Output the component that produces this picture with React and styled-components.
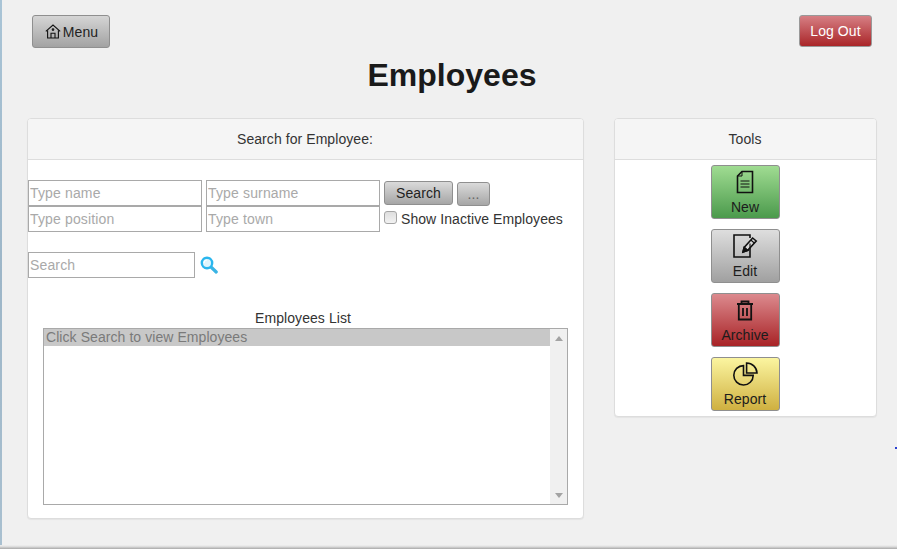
import React from "react";
import styled, { createGlobalStyle, css } from "styled-components";

const Global = createGlobalStyle`
  html, body { margin: 0; padding: 0; background: #f0f0f0; overflow: hidden; }
  * { box-sizing: border-box; }
  body { font-family: "Liberation Sans", Arial, sans-serif; font-size: 14px; color: #333; letter-spacing: 0.07px; }
`;

const Page = styled.div`
  position: relative;
  width: 897px;
  height: 549px;
  overflow: hidden;
  background: #f0f0f0;
  padding: 15px 20px 0 27px;
  &::before {
    content: "";
    position: absolute;
    left: 0; top: 0; bottom: 0;
    width: 2px;
    background: linear-gradient(180deg, #a9c4d6, #9db6c8 50%, #a9c0d0);
  }
  &::after {
    content: "";
    position: absolute;
    left: 0; right: 0; bottom: 0;
    height: 4px;
    background: linear-gradient(180deg, #f0f0f0 0%, #dcdcdc 40%, #a8a8a8 100%);
  }
`;

const TopBar = styled.div`
  display: flex;
  justify-content: space-between;
  align-items: flex-start;
  padding: 0 5px;
  height: 33px;
`;

const barButton = css`
  display: inline-flex;
  align-items: center;
  justify-content: center;
  border-radius: 3px;
  border: 1px solid #8f8f8f;
  font-family: inherit;
  letter-spacing: 0.07px;
  padding: 0;
`;

const MenuButton = styled.button`
  ${barButton}
  width: 78px;
  height: 33px;
  padding-left: 1px;
  font-size: 14px;
  color: #222;
  background: linear-gradient(180deg, #d5d5d5, #a2a2a2);
  gap: 2px;
`;

const LogOutButton = styled.button`
  ${barButton}
  width: 73px;
  height: 32px;
  font-size: 14px;
  color: #fff;
  border-color: #999;
  background: linear-gradient(180deg, #d67f84, #a92528);
`;

const Title = styled.h1`
  margin: 0;
  height: 70px;
  padding-top: 9px;
  font-size: 32px;
  line-height: 37px;
  font-weight: 700;
  letter-spacing: 0;
  color: #1a1a1a;
  text-align: center;
`;

const Columns = styled.div`
  display: flex;
  align-items: flex-start;
  gap: 30px;
`;

const Panel = styled.section`
  flex: none;
  width: ${(p) => p.$width}px;
  height: ${(p) => p.$height}px;
  background: #fff;
  border: 1px solid #ddd;
  border-radius: 4px;
  box-shadow: 0 1px 1px rgba(0, 0, 0, 0.05);
  overflow: hidden;
`;

const PanelHeading = styled.div`
  height: 41px;
  padding-right: 1px;
  background: #f5f5f5;
  border-bottom: 1px solid #ddd;
  display: flex;
  align-items: center;
  justify-content: center;
  font-size: 14px;
  color: #333;
`;

const SearchForm = styled.div`
  display: grid;
  grid-template-columns: 174px 174px auto;
  column-gap: 4px;
  padding-top: 20px;
  width: max-content;
`;

const TextField = styled.input`
  display: block;
  width: ${(p) => p.$width || 174}px;
  height: 26px;
  border: 1px solid #a9a9a9;
  padding: 0 1px;
  font: 14px "Liberation Sans", Arial, sans-serif;
  letter-spacing: 0.15px;
  color: #333;
  background: #fff;
  outline: none;
  border-radius: 0;
  &::placeholder { color: #a9a9a9; opacity: 1; }
`;

const ActionRow = styled.div`
  display: flex;
  align-items: flex-start;
  gap: 4px;
  padding-top: 1px;
`;

const SmallButton = styled.button`
  ${barButton}
  width: ${(p) => p.$width}px;
  height: 24px;
  margin-top: ${(p) => p.$top || 0}px;
  font-size: 14px;
  color: ${(p) => p.$color || "#222"};
  background: linear-gradient(180deg, #dadada, #a6a6a6);
`;

const CheckRow = styled.label`
  display: flex;
  align-items: center;
  gap: 4px;
  height: 26px;
  font-size: 14px;
  color: #333;
  padding-bottom: 1px;
`;

const Check = styled.input.attrs({ type: "checkbox" })`
  appearance: none;
  width: 13px;
  height: 13px;
  margin: 0 0 3px 0;
  border: 1px solid #a5a5a5;
  border-radius: 3px;
  background: linear-gradient(180deg, #dedede, #f2f2f2);
`;

const FilterRow = styled.div`
  display: flex;
  align-items: center;
  gap: 5px;
  margin-top: 20px;
`;

const ListSection = styled.div`
  margin: 32px 15px 0;
`;

const ListLabel = styled.div`
  text-align: center;
  font-size: 14px;
  line-height: 16px;
  height: 18px;
  padding-right: 5px;
  color: #333;
`;

const ListBox = styled.div`
  display: flex;
  width: 525px;
  height: 177px;
  border: 1px solid #a9a9a9;
  background: #fff;
`;

const ListItems = styled.div`
  flex: 1;
`;

const ListItem = styled.div`
  height: 17px;
  line-height: 17px;
  padding-left: 2px;
  font-size: 14px;
  color: #7a7a7a;
  background: #c8c8c8;
`;

const ScrollTrack = styled.div`
  width: 17px;
  background: #f0f0f0;
  display: flex;
  flex-direction: column;
  justify-content: space-between;
  align-items: center;
  padding: 7px 0 6px;
`;

const Arrow = styled.span`
  width: 0;
  height: 0;
  border-left: 4px solid transparent;
  border-right: 4px solid transparent;
  ${(p) =>
    p.$down
      ? "border-top: 5px solid #a3a3a3;"
      : "border-bottom: 5px solid #a3a3a3;"}
`;

const ToolStack = styled.div`
  display: flex;
  flex-direction: column;
  align-items: center;
  gap: 10px;
  padding-top: 5px;
`;

const tones = {
  green: "linear-gradient(180deg, #a0dc92, #4b9a4c)",
  grey: "linear-gradient(180deg, #dedede, #a0a0a0)",
  red: "linear-gradient(180deg, #dc8a8e, #a82326)",
  yellow: "linear-gradient(180deg, #fbf5a0, #cfb040)",
};

const ToolButton = styled.button`
  ${barButton}
  flex-direction: column;
  justify-content: flex-start;
  width: 69px;
  height: 54px;
  padding: 4px 1px 0 0;
  font-size: 14px;
  line-height: 16px;
  color: #1c1c1c;
  background: ${(p) => tones[p.$tone]};
  svg { display: block; margin-bottom: 5px; }
`;

const StrayDot = styled.span`
  position: absolute;
  left: 895px;
  top: 447px;
  width: 2px;
  height: 2px;
  background: #2a3fd0;
`;

const HomeIcon = () => (
  <svg width="16" height="15" viewBox="0 0 16 15" fill="none" stroke="#111" strokeWidth="1.1">
    <path d="M.8 7.3 8 1l7.2 6.3" />
    <path d="M2.6 6.2V14h10.8V6.2" />
    <path d="M6 14V9.2h4V14" />
    <circle cx="8" cy="5.6" r=".8" />
  </svg>
);

const NewIcon = () => (
  <svg width="18" height="24" viewBox="0 0 18 24" fill="none" stroke="#111" strokeWidth="1.6">
    <path d="M6 1.5h10.5v21h-15V6z" />
    <path d="M6 1.5V6H1.5" strokeWidth="1" />
    <path d="M4.5 11h9M4.5 14h9M4.5 17h9" strokeWidth="1.2" />
  </svg>
);

const EditIcon = () => (
  <svg width="25" height="24" viewBox="0 0 25 24" fill="none" stroke="#111" strokeWidth="1.6">
    <path d="M17 9.5V23H1V1h16v3" />
    <path d="M10 18l1.2-4.6L19.6 4l3.6 3-8.5 9.4z" fill="#fff" fillOpacity=".25" />
    <path d="M11.2 13.4l3.5 3M17.8 6l3.5 3" strokeWidth="1.1" />
    <path d="M10 18l1.2-4.6 3.5 3z" fill="#111" />
  </svg>
);

const TrashIcon = () => (
  <svg width="18" height="24" viewBox="0 -2 18 24" fill="none" stroke="#111" strokeWidth="1.8">
    <path d="M1 4h16" strokeWidth="2" />
    <path d="M5.5 4V1.5h7V4" />
    <path d="M2.8 4v15.5h12.4V4" />
    <path d="M7 8v8M11 8v8" />
  </svg>
);

const PieIcon = () => (
  <svg width="25" height="24" viewBox="0 0 25 24" fill="none" stroke="#111" strokeWidth="1.6">
    <path d="M10.5 3.6A9.7 9.7 0 1 0 20.2 13.4H10.5z" />
    <path d="M13.6 1v10h10.4A10.4 10.4 0 0 0 13.6 1z" />
  </svg>
);

const SearchIcon = () => (
  <svg width="18" height="18" viewBox="0 0 18 18" fill="none">
    <path d="M11 11l5.2 5" stroke="#3ab4e4" strokeWidth="3.2" strokeLinecap="round" />
    <circle cx="7" cy="7" r="5.2" fill="#def5fd" stroke="#2ab6ee" strokeWidth="2.4" />
    <path d="M4 7a3 3 0 0 1 3-3" stroke="#fff" strokeWidth="1.2" />
  </svg>
);

const tools = [
  { label: "New", tone: "green", Icon: NewIcon },
  { label: "Edit", tone: "grey", Icon: EditIcon },
  { label: "Archive", tone: "red", Icon: TrashIcon },
  { label: "Report", tone: "yellow", Icon: PieIcon },
];

export default function App() {
  return (
    <Page>
      <Global />
      <TopBar>
        <MenuButton><HomeIcon />Menu</MenuButton>
        <LogOutButton>Log Out</LogOutButton>
      </TopBar>
      <Title>Employees</Title>
      <Columns>
        <Panel $width={557} $height={401}>
          <PanelHeading>Search for Employee:</PanelHeading>
          <SearchForm>
            <TextField placeholder="Type name" />
            <TextField placeholder="Type surname" />
            <ActionRow>
              <SmallButton $width={69}>Search</SmallButton>
              <SmallButton $width={33} $top={1} $color="#666">...</SmallButton>
            </ActionRow>
            <TextField placeholder="Type position" />
            <TextField placeholder="Type town" />
            <CheckRow><Check />Show Inactive Employees</CheckRow>
          </SearchForm>
          <FilterRow>
            <TextField $width={167} placeholder="Search" />
            <SearchIcon />
          </FilterRow>
          <ListSection>
            <ListLabel>Employees List</ListLabel>
            <ListBox>
              <ListItems>
                <ListItem>Click Search to view Employees</ListItem>
              </ListItems>
              <ScrollTrack>
                <Arrow />
                <Arrow $down />
              </ScrollTrack>
            </ListBox>
          </ListSection>
        </Panel>
        <Panel $width={263} $height={299}>
          <PanelHeading>Tools</PanelHeading>
          <ToolStack>
            {tools.map(({ label, tone, Icon }) => (
              <ToolButton key={label} $tone={tone}>
                <Icon />
                {label}
              </ToolButton>
            ))}
          </ToolStack>
        </Panel>
      </Columns>
      <StrayDot />
    </Page>
  );
}
